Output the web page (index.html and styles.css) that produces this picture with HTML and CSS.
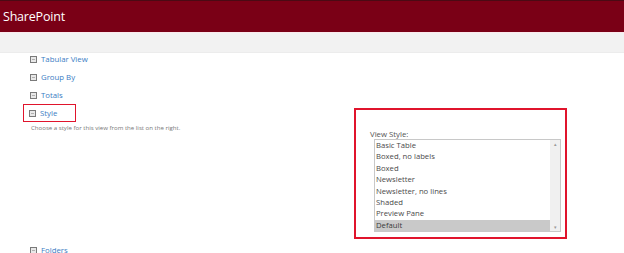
FILE: index.html
```html
<!DOCTYPE html>
<html lang="en">
<head>
    <meta charset="UTF-8">
    <title>SharePoint - View Style</title>
    <link rel="stylesheet" href="styles.css">
</head>
<body>
    <div class="suite-bar">
        <span class="brand">SharePoint</span>
    </div>
    <div class="ribbon"></div>

    <div class="page">
        <div class="sections">
            <div class="section"><span class="expander"></span><a href="#">Tabular View</a></div>
            <div class="section"><span class="expander"></span><a href="#">Group By</a></div>
            <div class="section"><span class="expander"></span><a href="#">Totals</a></div>
            <div class="section highlight"><span class="expander"></span><a href="#">Style</a></div>
            <p class="desc">Choose a style for this view from the list on the right.</p>
        </div>

        <div class="style-box">
            <label class="field-label">View Style:</label>
            <div class="listbox">
                <ul class="options">
                    <li>Basic Table</li>
                    <li>Boxed, no labels</li>
                    <li>Boxed</li>
                    <li>Newsletter</li>
                    <li>Newsletter, no lines</li>
                    <li>Shaded</li>
                    <li>Preview Pane</li>
                    <li class="selected">Default</li>
                </ul>
                <div class="scrollbar">
                    <span class="arrow">&#9652;</span>
                    <span class="arrow">&#9662;</span>
                </div>
            </div>
        </div>
    </div>

    <div class="section next"><span class="expander"></span><a href="#">Folders</a></div>
</body>
</html>
```

FILE: styles.css
```css
body {
    margin: 0;
    font-family: "Open Sans", "Noto Sans", sans-serif;
    background: #fff;
    width: 624px;
    height: 253px;
    overflow: hidden;
}
.suite-bar {
    height: 31px;
    background: #7a0016;
    border-top: 1px solid #4a0a14;
    display: flex;
    align-items: center;
    padding-left: 3px;
}
.brand {
    color: #fff;
    font-size: 12.5px;
    letter-spacing: -0.2px;
}
.ribbon {
    height: 19px;
    background: #f2f2f2;
    border-top: 1px solid #fbe9ec;
    border-bottom: 1px solid #ececec;
}
.page {
    display: flex;
    align-items: flex-start;
}
.sections {
    width: 354px;
    margin-top: -3px;
}
.section {
    display: flex;
    align-items: center;
    height: 18px;
    margin-left: 30px;
}
.section a {
    color: #3a7cc4;
    font-size: 7.8px;
    text-decoration: none;
}
.expander {
    width: 5px;
    height: 5px;
    border: 1px solid #7a7a7a;
    background: linear-gradient(#b0b0b0, #b0b0b0) center / 3px 1px no-repeat, #e8e8e8;
    margin-right: 4px;
}
.section.highlight {
    margin-left: 23px;
    padding-left: 5px;
    width: 46px;
    height: 16px;
    border: 1.5px solid #e0142c;
}
.desc {
    margin: 1px 0 0 31px;
    font-size: 6.1px;
    color: #777;
}
.style-box {
    margin-top: 55px;
    width: 213px;
    height: 131px;
    border: 2px solid #e0142c;
    padding: 19px 0 0 13px;
    box-sizing: border-box;
}
.field-label {
    display: block;
    font-size: 7.8px;
    color: #555;
    line-height: 10px;
    margin-left: 1px;
}
.listbox {
    display: flex;
    margin-left: 5px;
    width: 187px;
    height: 93px;
    border: 1px solid #c8c8c8;
    box-sizing: border-box;
}
.options {
    list-style: none;
    margin: 0;
    padding: 0;
    flex: 1;
}
.options li {
    font-size: 7.7px;
    color: #4a4a4a;
    height: 11.4px;
    line-height: 11.4px;
    padding-left: 1px;
    white-space: nowrap;
}
.options li.selected {
    background: #c9c9c9;
    color: #3a3a3a;
}
.scrollbar {
    width: 10px;
    background: #f0f0f0;
    display: flex;
    flex-direction: column;
    justify-content: space-between;
    align-items: center;
}
.arrow {
    font-size: 5px;
    color: #999;
    line-height: 8px;
}
.section.next {
    margin-top: 2px;
}
```
